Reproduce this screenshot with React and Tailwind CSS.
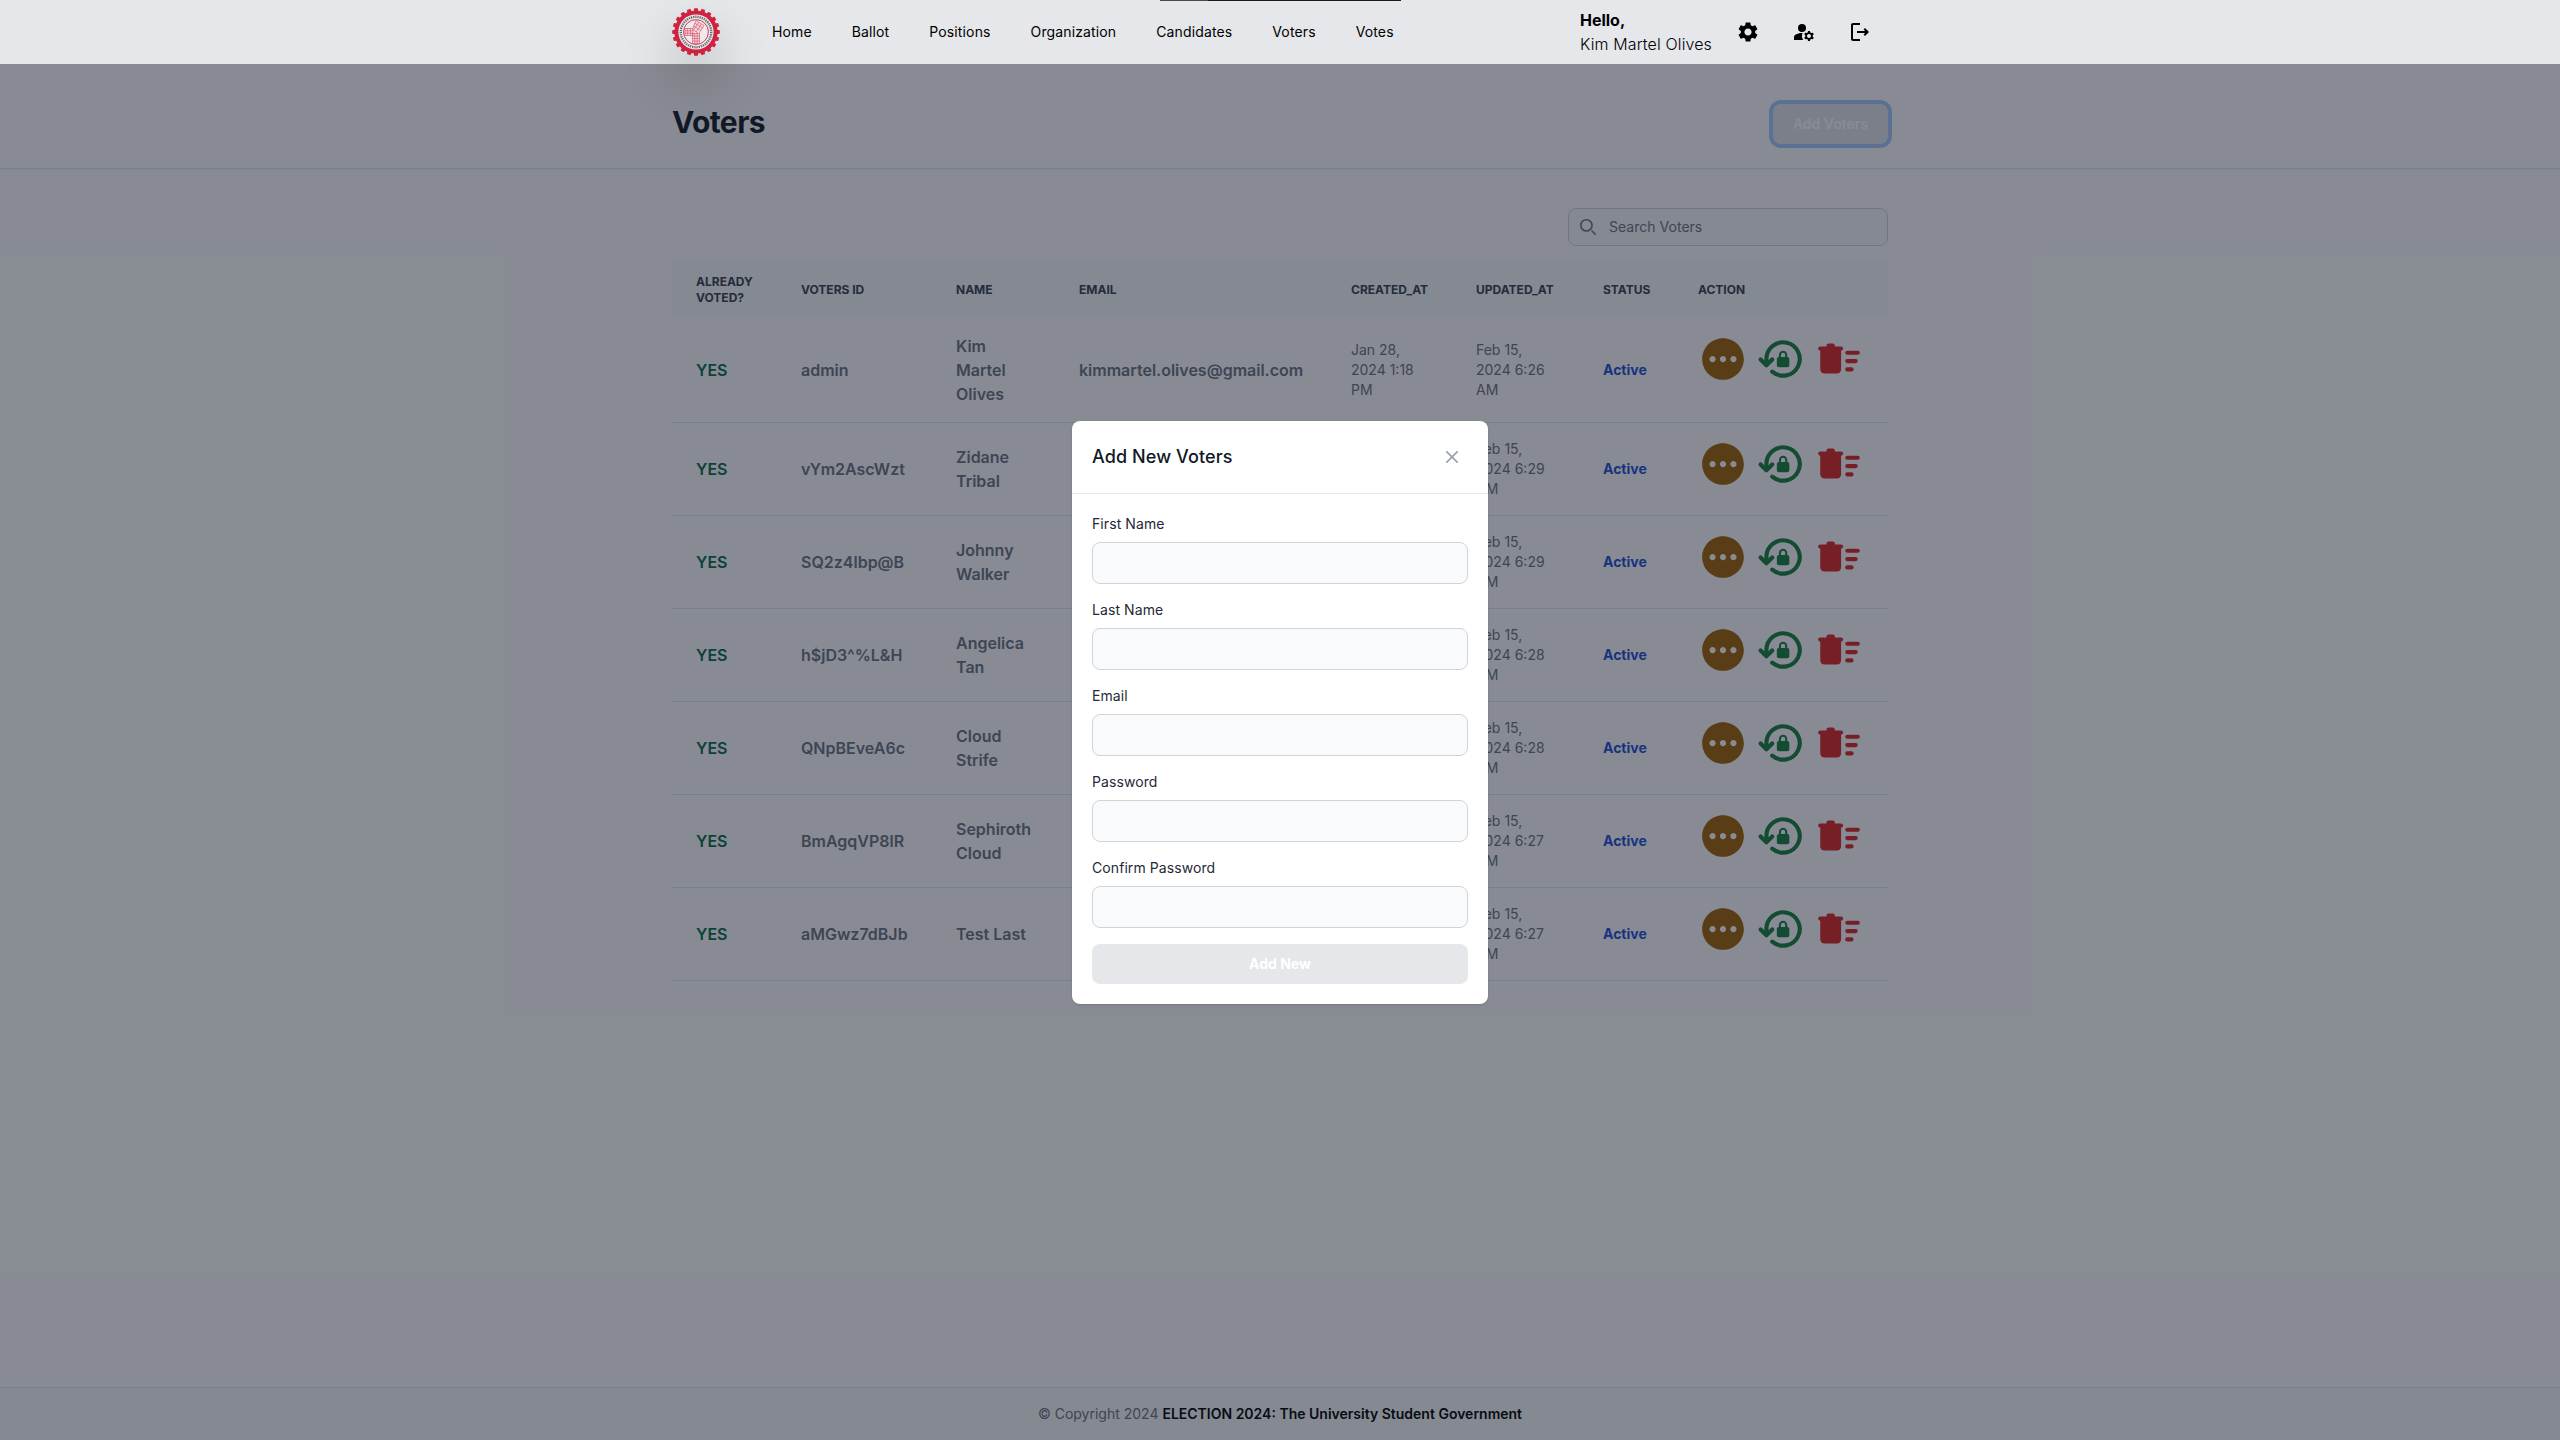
import React from "react";
import { MdSettings, MdManageAccounts, MdPending } from "react-icons/md";

const NAV = ["Home", "Ballot", "Positions", "Organization", "Candidates", "Voters", "Votes"];

const VOTERS = [
  { id: "admin", name: "Kim Martel Olives", email: "kimmartel.olives@gmail.com", created: "Jan 28, 2024 1:18 PM", updated: "Feb 15, 2024 6:26 AM" },
  { id: "vYm2AscWzt", name: "Zidane Tribal", updated: "Feb 15, 2024 6:29 AM" },
  { id: "SQ2z4lbp@B", name: "Johnny Walker", updated: "Feb 15, 2024 6:29 AM" },
  { id: "h$jD3^%L&H", name: "Angelica Tan", updated: "Feb 15, 2024 6:28 AM" },
  { id: "QNpBEveA6c", name: "Cloud Strife", updated: "Feb 15, 2024 6:28 AM" },
  { id: "BmAgqVP8lR", name: "Sephiroth Cloud", updated: "Feb 15, 2024 6:27 AM" },
  { id: "aMGwz7dBJb", name: "Test Last", updated: "Feb 15, 2024 6:27 AM" },
];

const FIELDS = ["First Name", "Last Name", "Email", "Password", "Confirm Password"];

const TEETH = Array.from({ length: 20 }, (_, i) => i * 18);

function Logo() {
  return (
    <svg viewBox="0 0 48 48" className="size-12 drop-shadow-[0_25px_25px_rgba(0,0,0,0.2)]">
      {TEETH.map((a) => (
        <path key={a} d="M21.500 5 L22.200 0.200 H25.800 L26.500 5 Z" fill="#cf2240" transform={`rotate(${a} 24 24)`} />
      ))}
      <circle cx="24" cy="24" r="21.600" fill="#cf2240" />
      <circle cx="24" cy="24" r="17.600" fill="#e9eaec" />
      <circle cx="24" cy="24" r="15.200" fill="none" stroke="#55565c" strokeWidth="2.400" strokeDasharray="1.300 0.900" opacity="0.85" />
      <circle cx="24" cy="24" r="12.400" fill="#eceaed" stroke="#d23a54" strokeWidth="1" />
      <g fill="#f6dce0" stroke="#d5455d" strokeWidth="0.600">
        <path d="M20.500 25.500h7v10h-7zM13 20.500h8v7h-8z" />
        <path d="M24 12.500l8 5-5.500 8.500-6-5z" />
        <path d="M22.800 25.500v10M25.200 25.500v10M20.500 28h7M20.500 30.500h7M20.500 33h7M15.700 20.500v7M18.400 20.500v7M13 22.800h8M13 25.200h8M26.600 14.200l-5 8M29.300 15.800l-5 8M22.800 15.200l8 5M21.700 18l7.200 4.500" fill="none" />
      </g>
    </svg>
  );
}

function LockReset() {
  return (
    <svg viewBox="0 0 24 24" className="size-[50px]" fill="none" stroke="currentColor" strokeLinecap="round" strokeLinejoin="round">
      <path d="M5 14V12a8 8 0 1 1 2.800 6.080" strokeWidth="2" />
      <path d="M2.200 12.200L5 15l2.800-2.800" strokeWidth="2" />
      <rect x="10" y="11" width="6" height="5" rx="1" fill="currentColor" stroke="none" />
      <path d="M11.500 11.500V10a1.500 1.500 0 0 1 3 0v1.500" strokeWidth="1" strokeLinecap="butt" />
    </svg>
  );
}

function DeleteSweep() {
  return (
    <svg viewBox="0 0 24 24" className="size-[50px]" fill="currentColor">
      <path d="M3 7.500h10V17a2 2 0 0 1-2 2H5a2 2 0 0 1-2-2z" />
      <rect x="2" y="6" width="12" height="2" rx="1" />
      <rect x="6" y="4.500" width="4" height="3" rx="1" />
      <rect x="15" y="8" width="7" height="2" rx="1" />
      <rect x="15" y="12" width="6" height="2" rx="1" />
      <rect x="15" y="16" width="4" height="2" rx="1" />
    </svg>
  );
}

function Header() {
  return (
    <header className="relative z-50 h-16 bg-[#e5e7eb] text-black">
      <div className="absolute top-0 left-[1160px] flex h-px w-[241px]">
        <div className="w-12 bg-[#4f484b]" />
        <div className="flex-1 bg-[#1c1a1c]" />
      </div>
      <div className="mx-auto flex h-16 w-[1216px] items-center pr-4">
        <Logo />
        <nav className="ml-[52px] flex gap-10 text-sm tracking-[0.13px]">
          {NAV.map((n) => (
            <a key={n}>{n}</a>
          ))}
        </nav>
        <div className="ml-auto text-base leading-6">
          <div className="font-bold">Hello,</div>
          <div className="font-light tracking-[0.13px]">Kim Martel Olives</div>
        </div>
        <div className="ml-6 flex gap-8">
          <MdSettings className="size-6" />
          <MdManageAccounts className="size-6" />
          <svg viewBox="0 0 24 24" className="size-6" fill="currentColor">
            <path d="M17 8l-1.410 1.410L17.170 11H9v2h8.170l-1.580 1.580L17 16l4-4-4-4zM5 5h7V3H5c-1.100 0-2 .900-2 2v14c0 1.100.900 2 2 2h7v-2H5V5z" />
          </svg>
        </div>
      </div>
    </header>
  );
}

function VotersTable() {
  return (
    <table className="w-[1216px] table-fixed border-collapse text-left text-sm text-[#6b7280]">
      <colgroup>
        <col className="w-[105px]" />
        <col className="w-[155px]" />
        <col className="w-[123px]" />
        <col className="w-[272px]" />
        <col className="w-[125px]" />
        <col className="w-[127px]" />
        <col className="w-[95px]" />
        <col className="w-[214px]" />
      </colgroup>
      <thead className="bg-[#f9fafb] text-xs text-[#374151] uppercase">
        <tr className="h-14">
          {["Already Voted?", "Voters ID", "Name", "Email", "Created_at", "Updated_at", "Status", "Action"].map((h) => (
            <th key={h} className="px-6 py-3 font-bold">{h}</th>
          ))}
        </tr>
      </thead>
      <tbody>
        {VOTERS.map((v) => (
          <tr key={v.id} className="border-b border-[#e5e7eb]">
            <td className="px-6 py-4 text-base font-semibold text-[#046c4e]">YES</td>
            <td className="px-6 py-4 text-base font-semibold">{v.id}</td>
            <td className="px-6 py-4 text-base font-semibold">{v.name}</td>
            <td className="px-6 py-4 text-base font-semibold">{v.email}</td>
            <td className="px-6 py-4">{v.created}</td>
            <td className="px-6 py-4">{v.updated}</td>
            <td className="px-6 py-4 font-bold text-[#1c4ed8]">Active</td>
            <td className="px-6 py-4 align-top">
              <div className="flex gap-2">
                <MdPending className="size-[50px] shrink-0 text-[#a16207]" />
                <div className="shrink-0 text-[#15803d]"><LockReset /></div>
                <div className="shrink-0 text-[#dc2626]"><DeleteSweep /></div>
              </div>
            </td>
          </tr>
        ))}
      </tbody>
    </table>
  );
}

function Modal() {
  return (
    <div className="absolute top-[421px] left-[1072px] z-40 h-[583px] w-[416px] rounded-lg bg-white shadow-sm">
      <div className="flex h-[73px] items-center justify-between border-b border-[#e5e7eb] px-5">
        <h3 className="text-lg font-medium tracking-[0.1px] text-[#111827]">Add New Voters</h3>
        <div className="flex size-8 items-center justify-center">
          <svg viewBox="0 0 14 14" className="size-3" fill="none" stroke="#9ca3af" strokeWidth="2" strokeLinecap="round">
            <path d="M1 1l12 12M13 1L1 13" />
          </svg>
        </div>
      </div>
      <form className="flex flex-col px-5 pt-5">
        <div className="flex flex-col gap-4">
          {FIELDS.map((f) => (
            <div key={f}>
              <label className="mb-2 block text-sm tracking-[0.08px] text-[#1f2937]">{f}</label>
              <div className="h-[42px] rounded-lg border border-[#d1d5db] bg-[#f9fafb]" />
            </div>
          ))}
        </div>
        <button type="button" className="mt-4 h-10 rounded-lg bg-[#e5e7eb] text-sm font-bold text-white">Add New</button>
      </form>
    </div>
  );
}

export default function App() {
  return (
    <div className="relative flex h-[1440px] w-[2560px] flex-col overflow-hidden bg-white font-['Inter',sans-serif]">
      <Header />
      <section className="mt-4 border-b border-[#e5e7eb] bg-white shadow-xs">
        <div className="mx-auto flex h-[88px] w-[1216px] items-center justify-between">
          <h1 className="pb-1 text-3xl font-bold tracking-[-0.6px] text-[#111827]">Voters</h1>
          <button type="button" className="h-10 w-[115px] rounded-lg bg-[#e5e7eb] text-sm font-semibold text-white ring-4 ring-[#a4cafe]">Add Voters</button>
        </div>
      </section>
      <main className="mx-auto flex w-[1216px] flex-1 flex-col pt-[39px]">
        <div className="mb-4 flex h-[38px] w-80 items-center self-end rounded-lg border border-[#d1d5db] bg-[#f9fafb] pl-[11px] text-sm tracking-[0.02px] text-[#6b7280]">
          <svg viewBox="0 0 20 20" className="mr-[13px] size-4" fill="none" stroke="currentColor" strokeWidth="2" strokeLinecap="round">
            <path d="M19 19l-4-4m0-7A7 7 0 1 1 1 8a7 7 0 0 1 14 0Z" />
          </svg>
          Search Voters
        </div>
        <VotersTable />
      </main>
      <footer className="flex h-[53px] items-center justify-center border-t border-[#e5e7eb] bg-[#f9fafb] text-sm text-[#6b7280]">
        © Copyright 2024&nbsp;<span className="font-semibold text-black">ELECTION 2024: The University Student Government</span>
      </footer>
      <div className="absolute inset-0 z-30 bg-[#111827]/50" />
      <Modal />
    </div>
  );
}
